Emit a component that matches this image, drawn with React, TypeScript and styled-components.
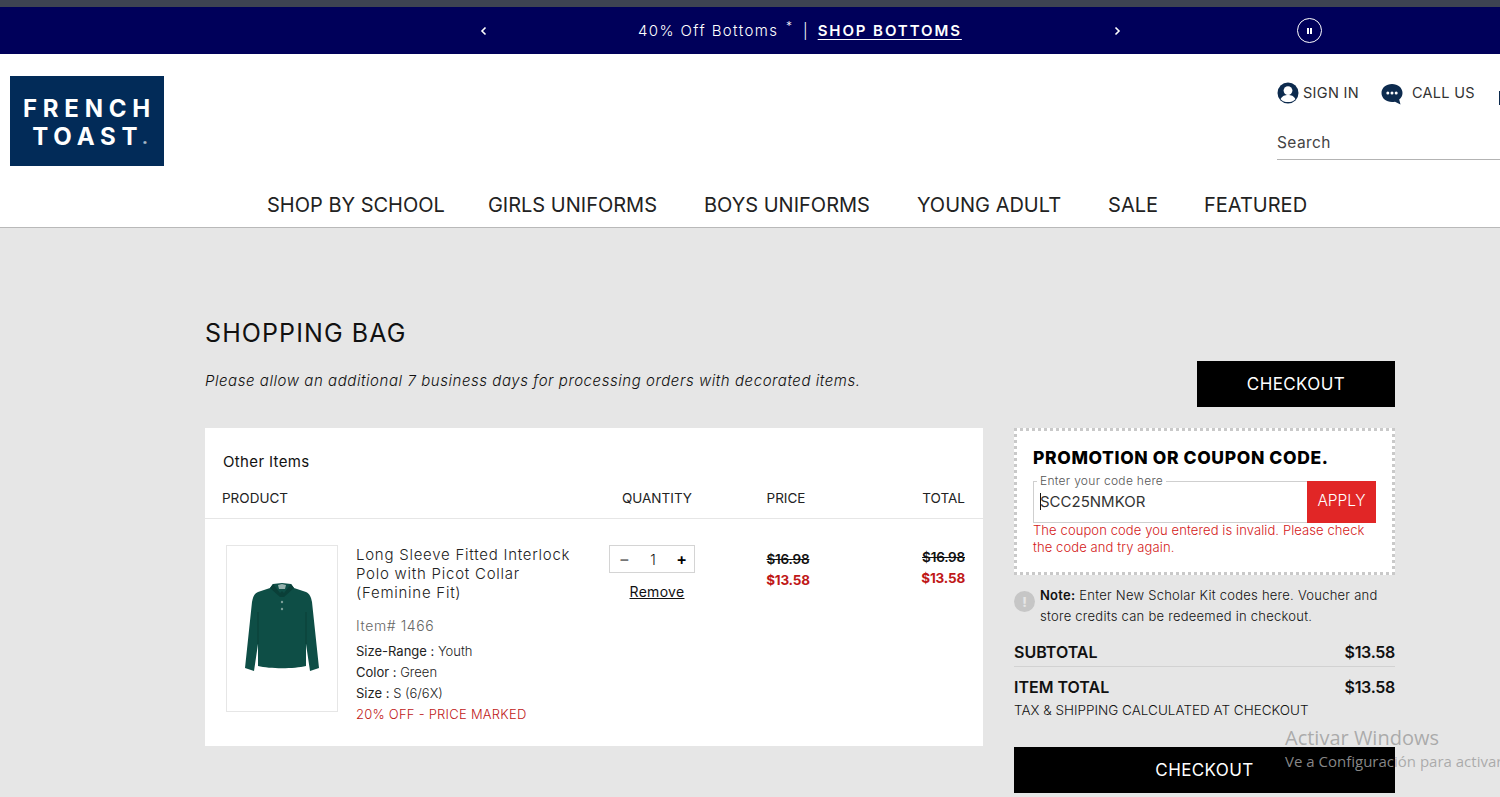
import React from 'react';
import styled, { createGlobalStyle } from 'styled-components';

const GlobalStyle = createGlobalStyle`
  html, body {
    margin: 0;
    padding: 0;
    height: 797px;
    overflow: hidden;
    background: #e6e6e6;
    font-family: Inter, "Liberation Sans", sans-serif;
    color: #111;
  }
  * { box-sizing: border-box; }
`;

const NAV_ITEMS = [
  { label: 'SHOP BY SCHOOL', gap: 0 },
  { label: 'GIRLS UNIFORMS', gap: 43 },
  { label: 'BOYS UNIFORMS', gap: 47 },
  { label: 'YOUNG ADULT', gap: 47 },
  { label: 'SALE', gap: 47 },
  { label: 'FEATURED', gap: 46 },
];

export default function App() {
  return (
    <Page>
      <GlobalStyle />
      <TopStrip />
      <PromoBanner>
        <BannerArrow viewBox="0 0 12 12">
          <path d="M7.5 2.5 4 6l3.5 3.5" />
        </BannerArrow>
        <PromoMessage>
          40% Off Bottoms <sup>*</sup> <PromoPipe>|</PromoPipe> <PromoLink>SHOP BOTTOMS</PromoLink>
        </PromoMessage>
        <BannerArrow $next viewBox="0 0 12 12">
          <path d="M4.5 2.5 8 6 4.5 9.5" />
        </BannerArrow>
        <PauseButton>
          <PauseBar />
          <PauseBar />
        </PauseButton>
      </PromoBanner>

      <SiteHeader>
        <HeaderTop>
          <Logo>
            <LogoLine>FRENCH</LogoLine>
            <LogoLine>
              TOAST<LogoMark>®</LogoMark>
            </LogoLine>
          </Logo>
          <HeaderTools>
            <ToolRow>
              <ToolLink>
                <svg width="22" height="22" viewBox="0 0 22 22">
                  <circle cx="11" cy="11" r="10.5" fill="#0d2b4e" />
                  <circle cx="11" cy="8.6" r="4.4" fill="#fff" />
                  <path d="M3.6 17.2C5 13.9 8 13 11 13s6 .9 7.4 4.2C16.6 19.4 14 20 11 20s-5.6-.6-7.4-2.8Z" fill="#fff" />
                </svg>
                <ToolLabel>SIGN IN</ToolLabel>
              </ToolLink>
              <ToolLink $wide>
                <ChatIcon width="22" height="21" viewBox="0 0 22 21">
                  <path d="M11 0c5.800 0 10.500 3.800 10.500 9 0 2.800-1.300 5-3.300 6.600l1.300 4.900-5.500-2.800c-1 .2-2 .3-3 .3C5.200 18 .5 14.200.5 9S5.200 0 11 0Z" fill="#0d2b4e" />
                  <circle cx="6.800" cy="9" r="1.500" fill="#fff" />
                  <circle cx="11" cy="9" r="1.500" fill="#fff" />
                  <circle cx="15.200" cy="9" r="1.500" fill="#fff" />
                </ChatIcon>
                <ToolLabel>CALL US</ToolLabel>
              </ToolLink>
              <BagStub />
            </ToolRow>
            <SearchField>Search</SearchField>
          </HeaderTools>
        </HeaderTop>
        <MainNav>
          {NAV_ITEMS.map((item) => (
            <NavItem key={item.label} $gap={item.gap}>
              {item.label}
            </NavItem>
          ))}
        </MainNav>
      </SiteHeader>

      <Content>
        <BagHeading>
          <div>
            <BagTitle>SHOPPING BAG</BagTitle>
            <BagNotice>Please allow an additional 7 business days for processing orders with decorated items.</BagNotice>
          </div>
          <CheckoutButton $width={198}>CHECKOUT</CheckoutButton>
        </BagHeading>

        <Columns>
          <ItemsCard>
            <GroupTitle>Other Items</GroupTitle>
            <TableHead>
              <HeadCell>PRODUCT</HeadCell>
              <HeadCell $align="center">QUANTITY</HeadCell>
              <HeadCell $align="center">PRICE</HeadCell>
              <HeadCell $align="right">TOTAL</HeadCell>
            </TableHead>
            <ItemRow>
              <ProductCell>
                <ProductThumb>
                  <svg width="76" height="92" viewBox="0 0 76 92">
                    <path
                      d="M29 2 38 1l9 1 3 4 12 4c4 2 5 5 6 10l7 66-9 3-4-27v22c-12 3-36 3-48 0V62l-4 27-9-3 7-66c1-5 2-8 6-10l12-4Z"
                      fill="#0e4e46"
                    />
                    <path d="M34 3 38 2l4 1-1 4H35Z" fill="#cfdcd9" opacity=".7" />
                    <path d="M29 2 36 11l2-2 2 2L47 2l3 4-10 9h-4L26 6Z" fill="#0a3f38" />
                    <path d="M14 30 14 62M62 30V62" stroke="#0a3f37" strokeWidth="1" fill="none" />
                    <circle cx="38" cy="20" r="1.200" fill="#7ea09a" />
                    <circle cx="38" cy="27" r="1.200" fill="#7ea09a" />
                  </svg>
                </ProductThumb>
                <ProductInfo>
                  <ProductName>Long Sleeve Fitted Interlock Polo with Picot Collar (Feminine Fit)</ProductName>
                  <ProductSku>Item# 1466</ProductSku>
                  <ProductAttr><b>Size-Range :</b> Youth</ProductAttr>
                  <ProductAttr><b>Color :</b> Green</ProductAttr>
                  <ProductAttr><b>Size :</b> S (6/6X)</ProductAttr>
                  <ProductAttr $sale>20% OFF - PRICE MARKED</ProductAttr>
                </ProductInfo>
              </ProductCell>
              <QuantityCell>
                <Stepper>
                  <StepSign $muted>−</StepSign>
                  <StepValue>1</StepValue>
                  <StepSign>+</StepSign>
                </Stepper>
                <RemoveLink>Remove</RemoveLink>
              </QuantityCell>
              <PriceCell $offset={5}>
                <OldPrice>$16.98</OldPrice>
                <NewPrice>$13.58</NewPrice>
              </PriceCell>
              <PriceCell $offset={3} $right>
                <OldPrice>$16.98</OldPrice>
                <NewPrice>$13.58</NewPrice>
              </PriceCell>
            </ItemRow>
          </ItemsCard>

          <Sidebar>
            <CouponBox>
              <CouponTitle>PROMOTION OR COUPON CODE.</CouponTitle>
              <CouponField>
                <FieldLegend>Enter your code here</FieldLegend>
                <CouponInput>
                  <Caret />
                  SCC25NMKOR
                </CouponInput>
                <ApplyButton>APPLY</ApplyButton>
              </CouponField>
              <CouponError>The coupon code you entered is invalid. Please check the code and try again.</CouponError>
            </CouponBox>
            <NoteRow>
              <NoteIcon>!</NoteIcon>
              <NoteText>
                <b>Note:</b> Enter New Scholar Kit codes here. Voucher and store credits can be redeemed in checkout.
              </NoteText>
            </NoteRow>
            <SummaryRow $ruled>
              <span>SUBTOTAL</span>
              <SummaryAmount>$13.58</SummaryAmount>
            </SummaryRow>
            <SummaryRow>
              <span>ITEM TOTAL</span>
              <SummaryAmount>$13.58</SummaryAmount>
            </SummaryRow>
            <TaxNote>TAX &amp; SHIPPING CALCULATED AT CHECKOUT</TaxNote>
            <CheckoutButton>CHECKOUT</CheckoutButton>
          </Sidebar>
        </Columns>
      </Content>

      <Watermark>
        <WatermarkTitle>Activar Windows</WatermarkTitle>
        <WatermarkLine>Ve a Configuración para activar</WatermarkLine>
      </Watermark>
    </Page>
  );
}

const Page = styled.div`
  position: relative;
  width: 1500px;
  height: 797px;
  overflow: hidden;
  background: #e6e6e6;
`;

const TopStrip = styled.div`
  height: 7px;
  background: #3d4352;
`;

const PromoBanner = styled.div`
  height: 47px;
  display: flex;
  align-items: center;
  padding-left: 478px;
  background: #00005a;
  color: #fff;
`;

const BannerArrow = styled.svg<{ $next?: boolean }>`
  width: 12px;
  height: 12px;
  margin-left: ${({ $next }) => ($next ? '149px' : '0')};
  fill: none;
  stroke: #fff;
  stroke-width: 1.6;
`;

const PromoMessage = styled.div`
  width: 324px;
  margin-left: 148px;
  font-size: 15px;
  font-weight: 300;
  letter-spacing: 1.4px;
  white-space: nowrap;

  sup {
    font-size: 12px;
    line-height: 0;
    margin: 0 3px 0 2px;
  }
`;

const PromoPipe = styled.span`
  margin: 0 3px 0 1px;
`;

const PromoLink = styled.span`
  font-weight: 600;
  letter-spacing: 1.9px;
  text-decoration: underline;
  text-underline-offset: 3px;
`;

const PauseButton = styled.div`
  width: 25px;
  height: 25px;
  margin-left: 174px;
  display: flex;
  align-items: center;
  justify-content: center;
  gap: 1.500px;
  border: 1px solid #fff;
  border-radius: 50%;
`;

const PauseBar = styled.span`
  width: 1.500px;
  height: 6px;
  background: #fff;
`;

const SiteHeader = styled.header`
  height: 174px;
  background: #fff;
  border-bottom: 1px solid #b9b9b9;
`;

const HeaderTop = styled.div`
  height: 129px;
  display: flex;
  justify-content: space-between;
  padding: 22px 0 0 10px;
`;

const Logo = styled.div`
  width: 154px;
  height: 90px;
  padding-top: 10px;
  display: flex;
  flex-direction: column;
  align-items: center;
  justify-content: center;
  background: #022b58;
  color: #fff;
`;

const LogoLine = styled.div`
  font-size: 24px;
  line-height: 28px;
  font-weight: 700;
  letter-spacing: 5.8px;
  margin-right: -5px;
  white-space: nowrap;
`;

const LogoMark = styled.sup`
  font-size: 5px;
  letter-spacing: 0;
  vertical-align: baseline;
`;

const HeaderTools = styled.div`
  width: 223px;
  padding-top: 5px;
`;

const ToolRow = styled.div`
  height: 24px;
  display: flex;
  align-items: center;
`;

const ToolLink = styled.div<{ $wide?: boolean }>`
  display: flex;
  align-items: center;
  gap: ${({ $wide }) => ($wide ? '9px' : '4px')};
  margin-right: ${({ $wide }) => ($wide ? '24px' : '22px')};
`;

const ChatIcon = styled.svg`
  margin-top: 2px;
`;

const ToolLabel = styled.span`
  margin-bottom: 2px;
  font-size: 14.500px;
  font-weight: 400;
  letter-spacing: 0.3px;
  color: #333;
  white-space: nowrap;
`;

const BagStub = styled.span`
  flex: none;
  width: 10px;
  height: 14px;
  margin-top: 10px;
  border: 2px solid #0d2b4e;
`;

const SearchField = styled.div`
  height: 30px;
  margin-top: 25px;
  padding-top: 3px;
  border-bottom: 1px solid #b3b3b3;
  font-size: 15.500px;
  letter-spacing: 0.4px;
  color: #444;
`;

const MainNav = styled.nav`
  display: flex;
  align-items: center;
  height: 44px;
  padding-left: 267px;
`;

const NavItem = styled.div<{ $gap: number }>`
  margin-left: ${({ $gap }) => $gap}px;
  font-size: 20px;
  font-weight: 400;
  letter-spacing: 0;
  color: #222;
  white-space: nowrap;
`;

const Content = styled.main`
  padding: 90px 105px 0 205px;
`;

const BagHeading = styled.div`
  display: flex;
  align-items: flex-end;
  justify-content: space-between;
  margin-bottom: 21px;
`;

const BagTitle = styled.h1`
  margin: 0 0 23px;
  font-size: 25px;
  line-height: 30px;
  font-weight: 400;
  letter-spacing: 1.1px;
  color: #111;
`;

const BagNotice = styled.p`
  margin: 0 0 16px;
  font-size: 15px;
  line-height: 20px;
  font-style: italic;
  font-weight: 300;
  letter-spacing: 0.56px;
`;

const CheckoutButton = styled.div<{ $width?: number }>`
  flex: none;
  width: ${({ $width }) => ($width ? `${$width}px` : '100%')};
  height: 46px;
  display: flex;
  align-items: center;
  justify-content: center;
  background: #000;
  color: #fff;
  font-size: 17px;
  letter-spacing: 0.4px;
`;

const Columns = styled.div`
  display: flex;
  align-items: flex-start;
  gap: 32px;
`;

const ItemsCard = styled.section`
  width: 778px;
  height: 318px;
  background: #fff;
`;

const GroupTitle = styled.div`
  padding: 24px 0 0 18px;
  font-size: 15px;
  line-height: 20px;
  letter-spacing: 0.35px;
`;

const TableHead = styled.div`
  display: grid;
  grid-template-columns: 361px 148px 110px 1fr;
  height: 47px;
  align-items: center;
  padding: 5px 18px 0 17px;
  border-bottom: 1px solid #e6e6e6;
`;

const HeadCell = styled.div<{ $align?: string }>`
  font-size: 13.500px;
  letter-spacing: 0;
  color: #222;
  text-align: ${({ $align }) => $align || 'left'};
`;

const ItemRow = styled.div`
  display: grid;
  grid-template-columns: 357px 148px 110px 1fr;
  padding: 26px 18px 0 21px;
`;

const ProductCell = styled.div`
  display: flex;
  gap: 18px;
`;

const ProductThumb = styled.div`
  flex: none;
  width: 112px;
  height: 167px;
  padding-bottom: 2px;
  display: flex;
  align-items: center;
  justify-content: center;
  border: 1px solid #e6e6e6;
`;

const ProductInfo = styled.div`
  width: 226px;
`;

const ProductName = styled.div`
  font-size: 15px;
  line-height: 19px;
  letter-spacing: 0.75px;
  font-weight: 300;
  color: #222;
  margin-bottom: 15px;
`;

const ProductSku = styled.div`
  font-size: 14px;
  line-height: 18px;
  letter-spacing: 0.6px;
  font-weight: 300;
  color: #666;
  margin-bottom: 6px;
`;

const ProductAttr = styled.div<{ $sale?: boolean }>`
  font-size: 13px;
  line-height: 21px;
  letter-spacing: ${({ $sale }) => ($sale ? '0.25px' : '0')};
  white-space: nowrap;
  font-weight: 300;
  color: ${({ $sale }) => ($sale ? '#c01818' : '#222')};

  b {
    font-weight: 400;
  }
`;

const QuantityCell = styled.div`
  display: flex;
  flex-direction: column;
  align-items: center;
`;

const Stepper = styled.div`
  width: 86px;
  height: 28px;
  margin-right: 10px;
  display: flex;
  align-items: center;
  justify-content: space-between;
  padding: 0 7px 0 9px;
  border: 1px solid #d4d4d4;
`;

const StepSign = styled.span<{ $muted?: boolean }>`
  font-size: 16px;
  font-weight: 600;
  color: ${({ $muted }) => ($muted ? '#777' : '#000')};
`;

const StepValue = styled.span`
  font-size: 14px;
  font-weight: 300;
`;

const RemoveLink = styled.span`
  margin-top: 9px;
  font-size: 14px;
  line-height: 20px;
  letter-spacing: 0.3px;
  text-decoration: underline;
`;

const PriceCell = styled.div<{ $offset: number; $right?: boolean }>`
  display: flex;
  flex-direction: column;
  gap: 3px;
  align-items: ${({ $right }) => ($right ? 'flex-end' : 'center')};
  padding-left: ${({ $right }) => ($right ? '0' : '4px')};
  padding-top: ${({ $offset }) => $offset}px;
`;

const OldPrice = styled.span`
  font-size: 13.500px;
  line-height: 18px;
  font-weight: 600;
  letter-spacing: -0.2px;
  text-decoration: line-through;
  color: #111;
`;

const NewPrice = styled.span`
  font-size: 13.500px;
  line-height: 18px;
  font-weight: 700;
  letter-spacing: -0.2px;
  color: #c01818;
`;

const Sidebar = styled.aside`
  width: 381px;
  margin-left: -1px;
`;

const CouponBox = styled.section`
  width: 381px;
  height: 147px;
  padding: 17px 16px 0 16px;
  background: #fff;
  border: 3px dotted #c9c9c9;
`;

const CouponTitle = styled.h2`
  margin: 0 0 13px;
  font-size: 17.500px;
  line-height: 20px;
  font-weight: 800;
  letter-spacing: 0.62px;
  white-space: nowrap;
  color: #000;
`;

const CouponField = styled.div`
  position: relative;
  display: flex;
  height: 42px;
  border: 1px solid #cfcfcf;
  border-right: 0;
`;

const FieldLegend = styled.span`
  position: absolute;
  top: -8px;
  left: 3px;
  padding: 0 3px;
  background: #fff;
  font-size: 12px;
  line-height: 14px;
  letter-spacing: 0.3px;
  font-weight: 300;
  color: #555;
  white-space: nowrap;
`;

const CouponInput = styled.div`
  flex: 1;
  display: flex;
  align-items: center;
  padding: 0 0 2px 6px;
  font-size: 15px;
  letter-spacing: 0;
  color: #333;
`;

const Caret = styled.span`
  width: 1px;
  height: 17px;
  margin-right: -1px;
  background: #111;
`;

const ApplyButton = styled.div`
  flex: none;
  width: 69px;
  margin: -1px 0;
  padding-bottom: 4px;
  display: flex;
  align-items: center;
  justify-content: center;
  background: #e12626;
  color: #fff;
  font-size: 15.500px;
  font-weight: 300;
`;

const CouponError = styled.p`
  margin: -1px 0 0;
  font-size: 13px;
  line-height: 17px;
  font-weight: 300;
  letter-spacing: 0.1px;
  color: #d42020;
`;

const NoteRow = styled.div`
  display: flex;
  align-items: flex-start;
  gap: 5px;
  margin-top: 10px;
`;

const NoteIcon = styled.span`
  flex: none;
  width: 21px;
  height: 21px;
  margin-top: 6px;
  display: flex;
  align-items: center;
  justify-content: center;
  border-radius: 50%;
  background: #c6c6c6;
  color: #e6e6e6;
  font-size: 13px;
  font-weight: 800;
`;

const NoteText = styled.div`
  font-size: 13px;
  line-height: 21px;
  letter-spacing: 0.25px;
  font-weight: 300;
  color: #111;

  b {
    font-weight: 600;
  }
`;

const SummaryRow = styled.div<{ $ruled?: boolean }>`
  display: flex;
  justify-content: space-between;
  align-items: center;
  height: ${({ $ruled }) => ($ruled ? '30px' : '40px')};
  margin-top: ${({ $ruled }) => ($ruled ? '10px' : '0')};
  border-bottom: ${({ $ruled }) => ($ruled ? '1px solid #d2d2d2' : '0')};
  font-size: 16px;
  font-weight: 600;
  color: #111;
`;

const SummaryAmount = styled.span`
  letter-spacing: -0.3px;
`;

const TaxNote = styled.div`
  margin: -6px 0 28px;
  font-size: 13.500px;
  line-height: 18px;
  font-weight: 300;
  white-space: nowrap;
  color: #111;
`;

const Watermark = styled.div`
  position: absolute;
  top: 724px;
  left: 1285px;
  white-space: nowrap;
  font-family: "Open Sans", "Liberation Sans", sans-serif;
  color: rgba(160, 160, 160, 0.85);
`;

const WatermarkTitle = styled.div`
  font-size: 20px;
  line-height: 27px;
`;

const WatermarkLine = styled.div`
  font-size: 15px;
  line-height: 20px;
`;
